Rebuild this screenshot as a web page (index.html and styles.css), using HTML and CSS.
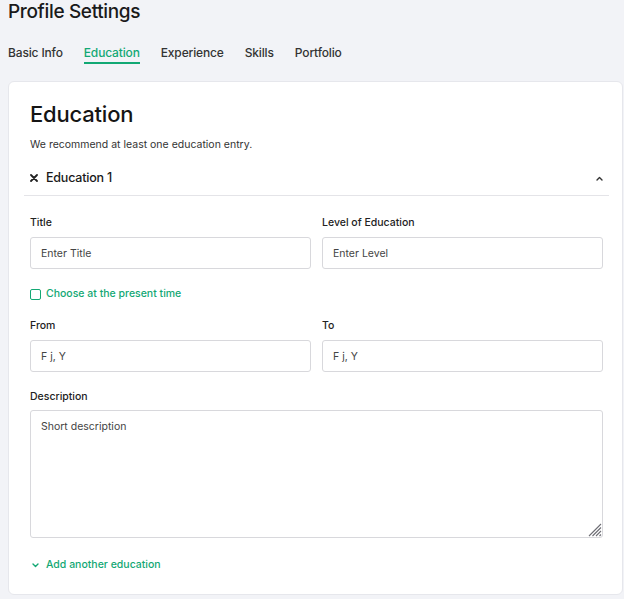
FILE: index.html
```html
<!DOCTYPE html>
<html lang="en">
<head>
<meta charset="utf-8">
<title>Profile Settings</title>
<link rel="stylesheet" href="styles.css">
</head>
<body>
<div class="page">
  <h1 class="page-title">Profile Settings</h1>
  <nav class="tabs">
    <a class="tab">Basic Info</a>
    <a class="tab tab-active">Education</a>
    <a class="tab">Experience</a>
    <a class="tab">Skills</a>
    <a class="tab">Portfolio</a>
  </nav>
  <section class="card">
    <h2 class="card-title">Education</h2>
    <p class="card-sub">We recommend at least one education entry.</p>
    <div class="acc-head">
      <svg class="icon-x" width="8" height="8" viewBox="0 0 8 8"><path d="M1 1L7 7M7 1L1 7" stroke="#222" stroke-width="1.8" stroke-linecap="round"/></svg>
      <span class="acc-title">Education 1</span>
      <svg class="icon-up" width="7" height="5" viewBox="0 0 7 5"><path d="M1 4L3.5 1.5L6 4" fill="none" stroke="#333" stroke-width="1.4" stroke-linecap="round" stroke-linejoin="round"/></svg>
    </div>
    <div class="acc-body">
      <div class="row">
        <label class="field">
          <span class="label">Title</span>
          <input class="input" type="text" placeholder="Enter Title">
        </label>
        <label class="field">
          <span class="label">Level of Education</span>
          <input class="input" type="text" placeholder="Enter Level">
        </label>
      </div>
      <label class="check">
        <span class="box"></span>
        <span>Choose at the present time</span>
      </label>
      <div class="row row-gap">
        <label class="field">
          <span class="label">From</span>
          <input class="input" type="text" placeholder="F j, Y">
        </label>
        <label class="field">
          <span class="label">To</span>
          <input class="input" type="text" placeholder="F j, Y">
        </label>
      </div>
      <label class="field field-desc">
        <span class="label">Description</span>
        <span class="ta-wrap">
          <textarea class="textarea" placeholder="Short description"></textarea>
          <svg class="grip" width="14" height="14" viewBox="0 0 14 14"><path d="M13 1L1 13M13 4.5L4.5 13M13 8L8 13M13 11.5L11.5 13" stroke="#6e6e74" stroke-width="1.1"/></svg>
        </span>
      </label>
      <a class="add-link">
        <svg width="7" height="5" viewBox="0 0 7 5"><path d="M1 1L3.5 3.5L6 1" fill="none" stroke="#13a874" stroke-width="1.4" stroke-linecap="round" stroke-linejoin="round"/></svg>
        <span>Add another education</span>
      </a>
    </div>
  </section>
</div>
</body>
</html>
```
FILE: styles.css
```css
* { box-sizing: border-box; }
html, body { margin: 0; padding: 0; }
body {
  background: #f2f3f7;
  font-family: Inter, "Noto Sans", "Liberation Sans", sans-serif;
  color: #1d1d1f;
}
.page { padding: 0 1px 6px 8px; }
.page-title {
  margin: 0;
  font-size: 19px;
  line-height: 24px;
  font-weight: 500;
  color: #1a1a1a;
  letter-spacing: -0.35px;
}
.tabs {
  display: flex;
  gap: 21px;
  margin-top: 20px;
}
.tab {
  font-size: 12px;
  line-height: 18px;
  color: #333;
  font-weight: 500;
  border-bottom: 2px solid transparent;
  letter-spacing: -0.15px;
}
.tab-active {
  color: #12a874;
  border-bottom-color: #12a874;
}
.card {
  margin-top: 17px;
  background: #fff;
  border: 1px solid #e6e7ec;
  border-radius: 6px;
  padding: 18px 13px 21px 15px;
}
.card-title {
  margin: 0 0 0 6px;
  font-size: 22px;
  line-height: 28px;
  font-weight: 500;
  color: #151515;
  letter-spacing: -0.2px;
}
.card-sub {
  margin: 9px 0 0 6px;
  font-size: 10.5px;
  line-height: 16px;
  color: #333;
}
.acc-head {
  margin-top: 7px;
  display: flex;
  align-items: center;
  padding: 9px 6px 8px;
  line-height: 18px;
  border-bottom: 1px solid #e4e4e8;
}
.icon-x { margin-right: 8px; }
.acc-title {
  flex: 1;
  font-size: 12.5px;
  font-weight: 500;
  color: #1a1a1a;
  letter-spacing: -0.2px;
}
.acc-body { padding: 0 6px; }
.row {
  display: grid;
  grid-template-columns: 1fr 1fr;
  gap: 11px;
  margin-top: 19px;
}
.row-gap { margin-top: 16px; }
.field { display: flex; flex-direction: column; }
.label {
  font-size: 10.5px;
  line-height: 16px;
  font-weight: 500;
  color: #222;
  margin-bottom: 6px;
}
.input, .textarea {
  font-family: inherit;
  font-size: 10.5px;
  color: #333;
  border: 1px solid #d8d8dc;
  border-radius: 3px;
  background: #fff;
  padding: 0 10px;
  outline: none;
}
.input { height: 32px; }
.input::placeholder, .textarea::placeholder { color: #444; opacity: 1; }
.check {
  display: flex;
  align-items: center;
  margin-top: 17px;
  font-size: 10.5px;
  line-height: 16px;
  font-weight: 500;
  color: #13a874;
}
.box {
  width: 11px;
  height: 11px;
  border: 1.5px solid #13a874;
  border-radius: 2px;
  margin-right: 5px;
}
.field-desc { margin-top: 17px; }
.field-desc .label { margin-bottom: 5px; }
.ta-wrap { position: relative; display: block; }
.textarea {
  display: block;
  width: 100%;
  height: 128px;
  padding: 9px 10px;
  resize: none;
  line-height: 14px;
}
.grip {
  position: absolute;
  right: 1px;
  bottom: 1px;
}
.add-link {
  display: flex;
  align-items: center;
  margin-top: 19px;
  font-size: 10.5px;
  line-height: 16px;
  font-weight: 500;
  color: #13a874;
}
.add-link svg { margin: 0 7px 0 2px; }
```
